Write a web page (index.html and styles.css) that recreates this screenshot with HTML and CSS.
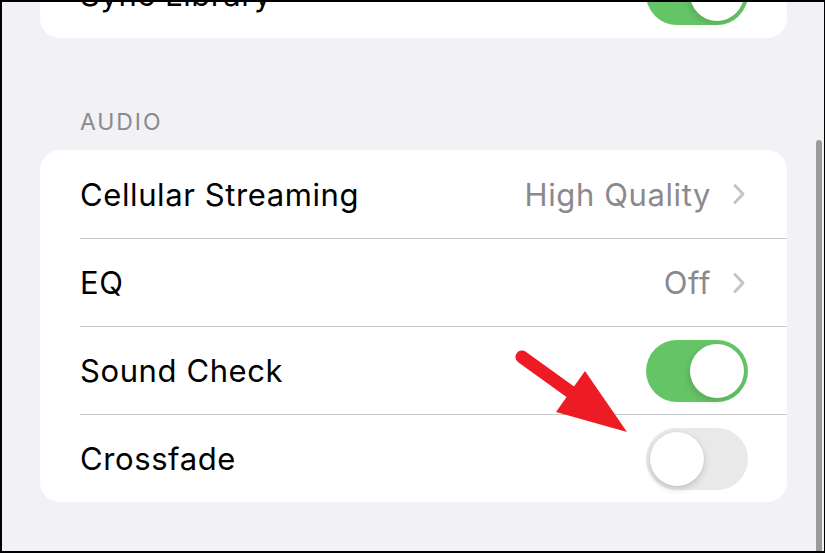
FILE: index.html
```html
<!DOCTYPE html>
<html lang="en">
<head>
<meta charset="utf-8">
<title>Music Settings</title>
<link rel="stylesheet" href="styles.css">
</head>
<body>
<div class="screen">
  <div class="card card-top">
    <div class="row">
      <span class="label">Sync Library</span>
      <span class="toggle on"><span class="knob"></span></span>
    </div>
  </div>

  <div class="section-header">AUDIO</div>
  <div class="card">
    <div class="row">
      <span class="label">Cellular Streaming</span>
      <span class="value">High Quality</span>
      <svg class="chevron" width="14" height="22" viewBox="0 0 14 22"><path d="M3 2.5 L11 11 L3 19.5" fill="none" stroke="#c4c4c7" stroke-width="3" stroke-linecap="round" stroke-linejoin="round"/></svg>
    </div>
    <div class="row">
      <span class="label">EQ</span>
      <span class="value">Off</span>
      <svg class="chevron" width="14" height="22" viewBox="0 0 14 22"><path d="M3 2.5 L11 11 L3 19.5" fill="none" stroke="#c4c4c7" stroke-width="3" stroke-linecap="round" stroke-linejoin="round"/></svg>
    </div>
    <div class="row">
      <span class="label">Sound Check</span>
      <span class="toggle on"><span class="knob"></span></span>
    </div>
    <div class="row">
      <span class="label">Crossfade</span>
      <span class="toggle off"><span class="knob"></span></span>
    </div>
  </div>

  <svg class="arrow" width="140" height="100" viewBox="0 0 140 100">
    <line x1="22" y1="17" x2="72" y2="53" stroke="#ed1c24" stroke-width="13" stroke-linecap="round"/>
    <polygon points="85,31 56,72 127,92" fill="#ed1c24"/>
  </svg>

  <div class="scrollbar"></div>
</div>
</body>
</html>
```

FILE: styles.css
```css
html, body {
  margin: 0;
  padding: 0;
  background: #000;
}

.screen {
  position: relative;
  margin: 2px 1px 2px 2px;
  height: 549px;
  background: #f2f1f6;
  overflow: hidden;
  font-family: Inter, "Noto Sans", "Liberation Sans", sans-serif;
}

.card {
  margin: 0 37px 0 38px;
  background: #fff;
  border-radius: 20px;
}

.card-top {
  margin-top: -52px;
}

.section-header {
  margin: 72px 0 16px 78px;
  height: 24px;
  line-height: 24px;
  font-size: 23px;
  color: #8a8a8e;
  letter-spacing: 1.9px;
}

.row {
  display: flex;
  align-items: center;
  height: 88px;
  margin-left: 40px;
  padding-right: 39px;
  box-sizing: border-box;
}

.row + .row {
  border-top: 1px solid #c8c8ca;
}

.label {
  flex: 1;
  font-size: 31px;
  color: #000;
  letter-spacing: 0.6px;
}

.value {
  font-size: 31px;
  color: #8a8a8e;
  letter-spacing: 0.6px;
  margin-right: 21px;
}

.chevron {
  display: block;
  margin-right: 2px;
}

.toggle {
  position: relative;
  display: block;
  width: 102px;
  height: 62px;
  border-radius: 31px;
  box-sizing: border-box;
}

.toggle.on {
  background: #65c466;
}

.toggle.off {
  background: #e9e9ea;
}

.knob {
  position: absolute;
  top: 4px;
  width: 54px;
  height: 54px;
  border-radius: 50%;
  background: #fff;
}

.toggle.on .knob {
  right: 4px;
  box-shadow: -2px 3px 6px rgba(0, 0, 0, 0.12);
}

.toggle.off .knob {
  left: 4px;
  box-shadow: 0 3px 7px rgba(0, 0, 0, 0.16), 0 0 0 0.5px rgba(0, 0, 0, 0.05);
}

.arrow {
  position: absolute;
  left: 498px;
  top: 338px;
}

.scrollbar {
  position: absolute;
  right: 2px;
  top: 138px;
  bottom: 0;
  width: 6px;
  border-radius: 3px 3px 0 0;
  background: #9b9b9b;
}
```
